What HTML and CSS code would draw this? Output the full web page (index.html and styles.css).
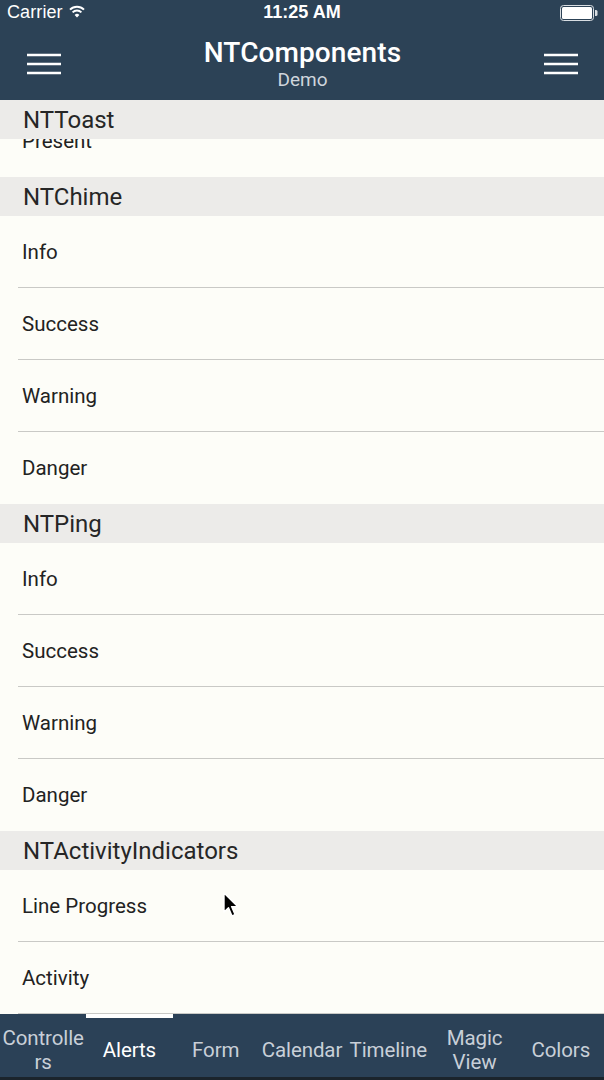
FILE: index.html
```html
<!DOCTYPE html>
<html>
<head>
<meta charset="utf-8">
<link rel="stylesheet" href="styles.css">
</head>
<body>
<div class="app">
  <header class="topbar">
    <div class="status">
      <div class="status-left">
        <span class="carrier">Carrier</span>
        <svg class="wifi" width="16" height="13" viewBox="0 0 16 13">
          <path d="M1 4.6 A10 10 0 0 1 15 4.6" fill="none" stroke="#fff" stroke-width="2"/>
          <path d="M3.6 7.4 A6.3 6.3 0 0 1 12.4 7.4" fill="none" stroke="#fff" stroke-width="2"/>
          <path d="M8 12.6 L5.6 9.9 A3.4 3.4 0 0 1 10.4 9.9 Z" fill="#fff"/>
        </svg>
      </div>
      <span class="time">11:25 AM</span>
      <div class="status-right">
        <svg class="battery" width="38" height="16" viewBox="0 0 38 16">
          <rect x="0.5" y="0.5" width="33" height="15" rx="3" fill="none" stroke="#d8dde2" stroke-width="1"/>
          <rect x="2" y="2" width="30" height="12" rx="1.5" fill="#fff"/>
          <path d="M35 5 h1 a1.5 1.5 0 0 1 1.5 1.5 v3 a1.5 1.5 0 0 1 -1.5 1.5 h-1 z" fill="#d8dde2"/>
        </svg>
      </div>
    </div>
    <nav class="navbar">
      <button class="menu" aria-label="menu">
        <svg width="34" height="22" viewBox="0 0 34 22"><path d="M0 2h34M0 11h34M0 20h34" stroke="#fff" stroke-width="2.4"/></svg>
      </button>
      <div class="titles">
        <div class="title">NTComponents</div>
        <div class="subtitle">Demo</div>
      </div>
      <button class="menu" aria-label="menu">
        <svg width="34" height="22" viewBox="0 0 34 22"><path d="M0 2h34M0 11h34M0 20h34" stroke="#fff" stroke-width="2.4"/></svg>
      </button>
    </nav>
  </header>

  <main class="content">
    <div class="section-head sticky">NTToast</div>
    <div class="list">
      <div class="row last">Present</div>

      <div class="section-head">NTChime</div>
      <div class="row">Info</div>
      <div class="row">Success</div>
      <div class="row">Warning</div>
      <div class="row last">Danger</div>

      <div class="section-head">NTPing</div>
      <div class="row">Info</div>
      <div class="row">Success</div>
      <div class="row">Warning</div>
      <div class="row last">Danger</div>

      <div class="section-head">NTActivityIndicators</div>
      <div class="row">Line Progress</div>
      <div class="row">Activity</div>
    </div>
    <svg class="cursor" width="20" height="28" viewBox="0 0 20 28">
      <path d="M2 2 L2 21 L6.5 16.8 L10 25 L13 23.6 L9.6 15.6 L15.6 15.6 Z" fill="#000" stroke="#fff" stroke-width="1.4" stroke-linejoin="round"/>
    </svg>
  </main>

  <footer class="tabbar">
    <div class="tab">Controllers</div>
    <div class="tab active">Alerts</div>
    <div class="tab">Form</div>
    <div class="tab">Calendar</div>
    <div class="tab">Timeline</div>
    <div class="tab">Magic View</div>
    <div class="tab">Colors</div>
  </footer>
</div>
</body>
</html>
```

FILE: styles.css
```css
* { box-sizing: border-box; }
html, body { margin: 0; padding: 0; }
body {
  width: 604px;
  height: 1080px;
  overflow: hidden;
  font-family: Roboto, "Noto Sans", sans-serif;
  background: #fdfdf8;
}
.app {
  display: flex;
  flex-direction: column;
  height: 1080px;
}
.topbar {
  background: #2c4256;
  color: #fff;
  height: 100px;
  flex: none;
}
.status {
  height: 25px;
  display: flex;
  align-items: center;
  justify-content: space-between;
  padding: 0 6px 0 7px;
  font-family: "Liberation Sans", Arial, sans-serif;
  font-size: 18px;
  position: relative;
}
.status-left { display: flex; align-items: center; gap: 6px; }
.carrier { letter-spacing: 0.1px; }
.wifi { margin-top: -2px; }
.time {
  position: absolute;
  left: 0; right: 0;
  text-align: center;
  font-weight: bold;
  pointer-events: none;
}
.status-right { display: flex; align-items: center; }
.navbar {
  height: 75px;
  display: flex;
  align-items: center;
  justify-content: space-between;
  padding: 0 26px 0 27px;
}
.menu {
  background: none;
  border: 0;
  padding: 0;
  width: 34px;
  height: 22px;
  margin-top: 3px;
  display: block;
}
.menu svg { display: block; }
.titles {
  text-align: center;
  display: flex;
  flex-direction: column;
  align-items: center;
  margin-top: 3px;
}
.title {
  font-size: 28px;
  font-weight: 500;
  line-height: 32px;
  letter-spacing: 0.1px;
}
.subtitle {
  font-size: 19px;
  line-height: 22px;
  color: #cfd5dc;
}
.content {
  flex: 1;
  position: relative;
  overflow: hidden;
  background: #fdfdf8;
}
.list { padding-top: 5px; }
.section-head {
  height: 39px;
  background: #ecebe9;
  color: #262626;
  font-size: 24px;
  padding-left: 23px;
  display: flex;
  align-items: center;
  line-height: 1;
}
.section-head.sticky {
  position: absolute;
  top: 0; left: 0; right: 0;
  z-index: 2;
  padding-top: 1px;
}
.row {
  height: 72px;
  display: flex;
  align-items: center;
  padding-left: 22px;
  font-size: 20.5px;
  color: #222;
  position: relative;
}
.row::after {
  content: "";
  position: absolute;
  left: 18px; right: 0; bottom: 0;
  height: 1px;
  background: #c9c9c6;
}
.row.last::after { display: none; }
.cursor {
  position: absolute;
  left: 222px;
  top: 791px;
  z-index: 3;
}
.tabbar {
  flex: none;
  height: 66px;
  background: #2b4157;
  border-bottom: 3px solid #1b242c;
  display: grid;
  grid-template-columns: repeat(7, 1fr);
  padding-top: 9px;
}
.tab {
  display: flex;
  align-items: center;
  justify-content: center;
  text-align: center;
  font-size: 20.5px;
  line-height: 24px;
  color: #c8cfd8;
  overflow-wrap: anywhere;
  min-width: 0;
  position: relative;
  padding: 0;
  letter-spacing: -0.1px;
}
.tab.active { color: #fff; }
.tab.active::before {
  content: "";
  position: absolute;
  left: 0; right: 0; top: -9px;
  height: 4px;
  background: #fff;
}
```
